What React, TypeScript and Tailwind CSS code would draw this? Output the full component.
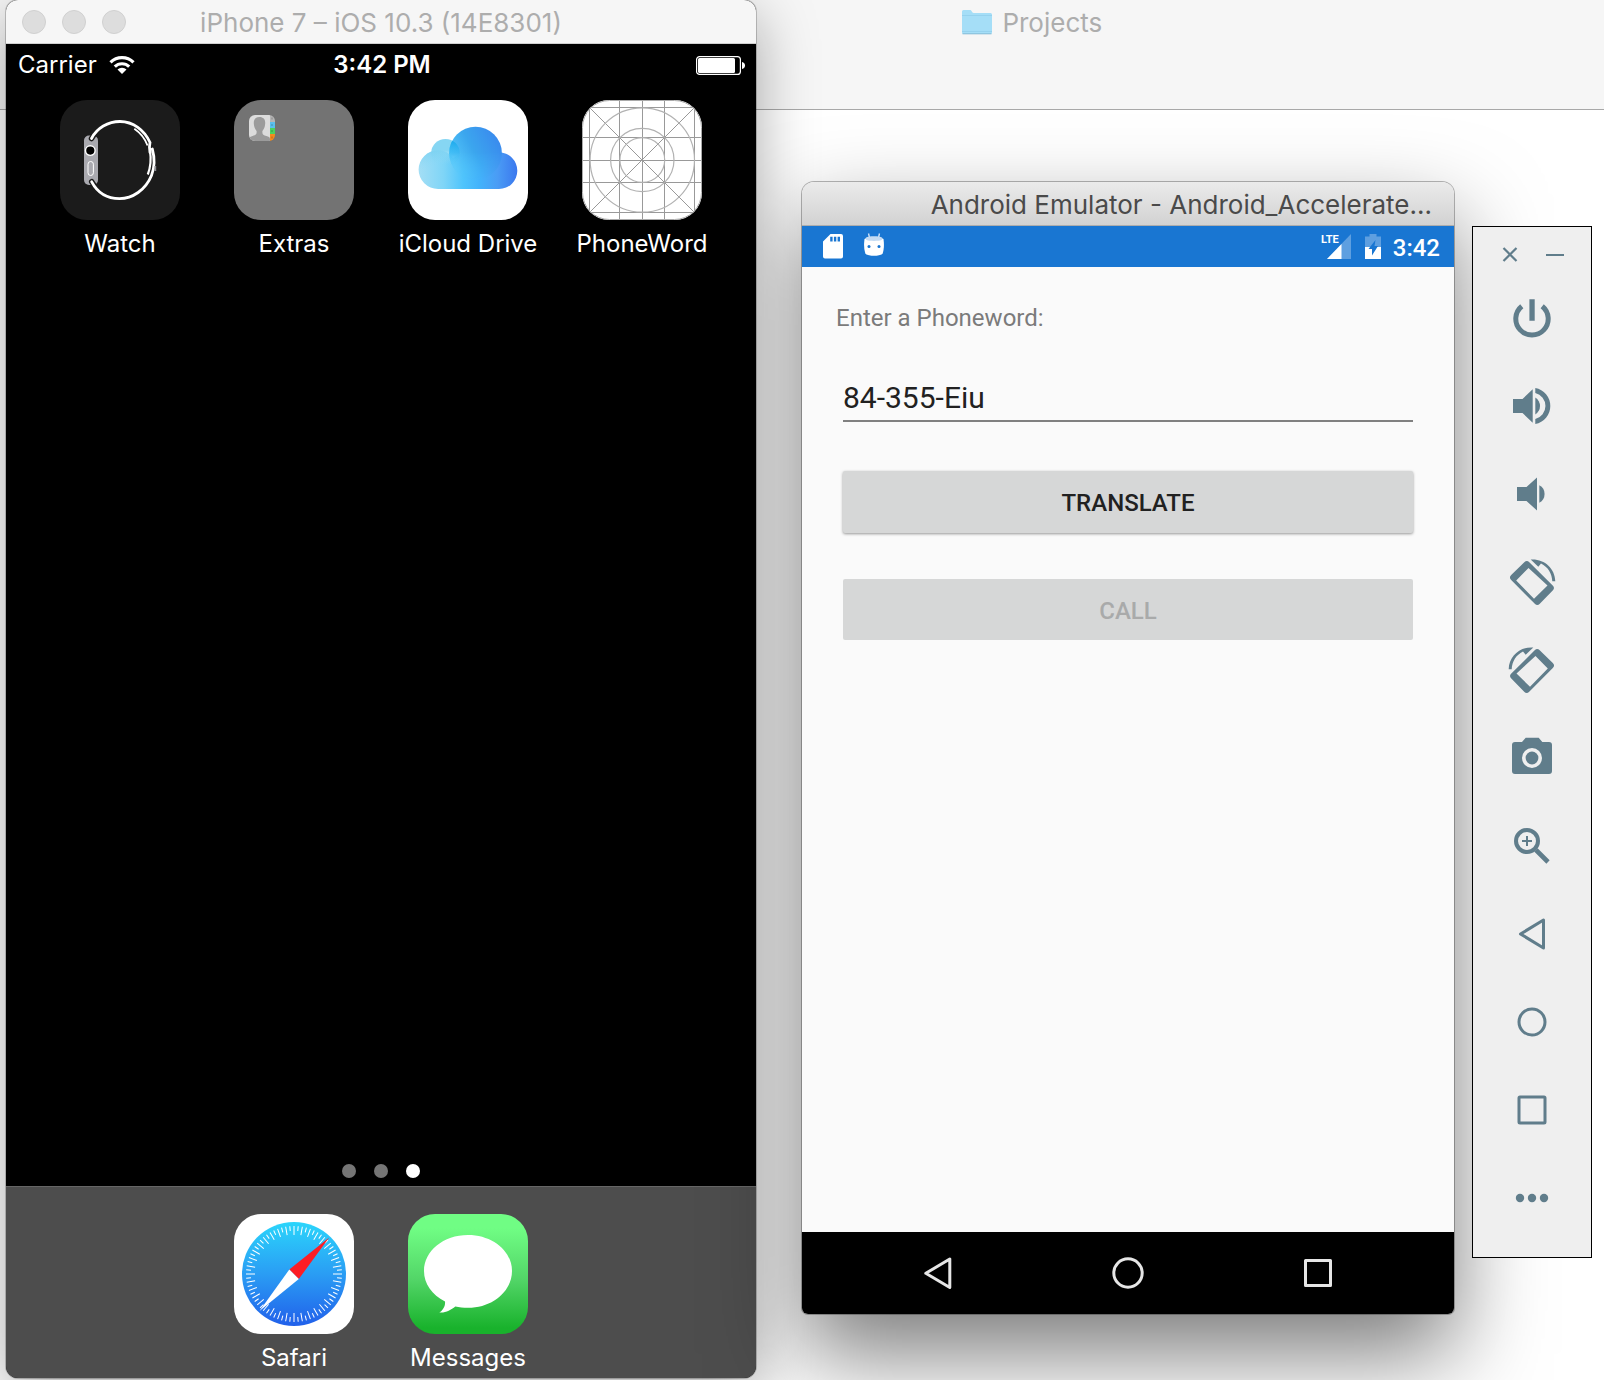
import type { ReactNode } from "react";

const APPLE = "font-['Inter',sans-serif]";
const DROID = "font-['Roboto',sans-serif]";

/* ---------- iOS icons ---------- */

function WatchIcon() {
  return (
    <svg viewBox="0 0 120 120" className="size-30" fill="none" stroke="#fff" aria-hidden="true">
      <rect width="120" height="120" rx="27" fill="#1b1b1b" stroke="none" />
      <rect x="24" y="35.500" width="14" height="49.500" rx="5" fill="#a9a9af" stroke="none" />
      <path d="M31.500 38.500l2-3M31.700 81.700l2 3" stroke="#1b1b1b" strokeWidth="5.500" strokeLinecap="round" />
      <path d="M31.500 38.500C37 28 48 21.500 60 21.500c13 0 24.500 8.500 30 21-1 4-.8 6 0 10" strokeWidth="2.800" strokeLinecap="round" />
      <path d="M90 51c1.300 8 .6 16-2.200 23.500" strokeWidth="2.200" />
      <path d="M92.300 49c2.800 10 2.500 18-.8 26.500C85.500 90 72.500 98.600 59.500 98.600c-12 0-22-6-27.800-16.800" strokeWidth="2.800" strokeLinecap="round" />
      <path d="M74.300 28.800c6 4 10.500 9.500 13.200 16.700" strokeWidth="1.800" />
      <path d="M95.300 66v5" stroke="#8e8e93" strokeWidth="1.800" />
      <circle cx="30.300" cy="50.600" r="4.800" fill="#000" strokeWidth="1.400" />
      <rect x="28" y="61.500" width="5.400" height="14" rx="2.700" strokeWidth="1" />
    </svg>
  );
}

function ExtrasIcon() {
  return (
    <svg viewBox="0 0 120 120" className="size-30" aria-hidden="true">
      <defs>
        <clipPath id="contact">
          <rect x="15" y="15" width="26" height="26" rx="6" />
        </clipPath>
      </defs>
      <rect width="120" height="120" rx="27" fill="#737373" />
      <g clipPath="url(#contact)">
        <rect x="15" y="15" width="21" height="26" fill="#dcdcdc" />
        <path d="M25.500 17c-4 0-6 2.500-5.700 6.500.2 4 1.700 6 2.800 7.500.3 3.500-1 4-4 5-2 .6-3.600 1-3.600 3v2h21v-2c0-2-1.600-2.400-3.600-3-3-1-4.300-1.500-4-5 1.100-1.500 2.600-3.500 2.800-7.500.3-4-1.700-6.500-5.700-6.500z" fill="#9b9b9b" />
        <rect x="36" y="15" width="5" height="7" fill="#b5b5b5" />
        <rect x="36" y="22" width="5" height="6" fill="#5ac0ee" />
        <rect x="36" y="28" width="5" height="6" fill="#4cd15f" />
        <rect x="36" y="34" width="5" height="7" fill="#f38b1e" />
        <path d="M38 17.500v2M38 24v2M38 30v2M38 36.500v2" stroke="#00000040" />
      </g>
    </svg>
  );
}

function CloudIcon() {
  return (
    <svg viewBox="0 0 120 120" className="size-30" aria-hidden="true">
      <defs>
        <linearGradient id="base" gradientUnits="userSpaceOnUse" x1="11" y1="0" x2="109" y2="0">
          <stop offset="0" stopColor="#a3def5" />
          <stop offset="0.25" stopColor="#7fd5f7" />
          <stop offset="0.45" stopColor="#4fc4fc" />
          <stop offset="0.62" stopColor="#42b2fb" />
          <stop offset="0.8" stopColor="#4a9cf5" />
          <stop offset="1" stopColor="#3b78ee" />
        </linearGradient>
        <linearGradient id="dome" gradientUnits="userSpaceOnUse" x1="46" y1="64" x2="92" y2="40">
          <stop offset="0" stopColor="#55c8fa" />
          <stop offset="0.45" stopColor="#3ba6ee" />
          <stop offset="1" stopColor="#3a8aee" />
        </linearGradient>
        <linearGradient id="domeFade" gradientUnits="userSpaceOnUse" x1="0" y1="30" x2="0" y2="80">
          <stop offset="0.45" stopColor="#fff" />
          <stop offset="1" stopColor="#000" />
        </linearGradient>
        <linearGradient id="puff" x1="0" y1="0" x2="0" y2="1">
          <stop offset="0.400" stopColor="#86d6f3" />
          <stop offset="0.900" stopColor="#86d6f3" stopOpacity="0" />
        </linearGradient>
        <linearGradient id="overlap" gradientUnits="userSpaceOnUse" x1="0" y1="40" x2="0" y2="66">
          <stop offset="0" stopColor="#14a8ec" stopOpacity="0.900" />
          <stop offset="1" stopColor="#4cc4f8" stopOpacity="0" />
        </linearGradient>
        <linearGradient id="left" x1="0" y1="0" x2="0.300" y2="1">
          <stop offset="0" stopColor="#6fcdf0" stopOpacity="0.700" />
          <stop offset="0.500" stopColor="#8ed8f5" stopOpacity="0" />
        </linearGradient>
        <mask id="domeMask">
          <rect width="120" height="120" fill="url(#domeFade)" />
        </mask>
        <clipPath id="domeClip">
          <circle cx="67.500" cy="53.200" r="26.400" />
        </clipPath>
      </defs>
      <rect width="120" height="120" rx="27" fill="#fff" />
      <path d="M30 50.200a19.400 19.400 0 0 0 0 38.800h61a18.300 18.300 0 1 0 0-36.600L67 45 45 58A19.400 19.400 0 0 0 30 50.200z" fill="url(#base)" />
      <circle cx="37.500" cy="53.200" r="14.300" fill="url(#puff)" />
      <circle cx="30.400" cy="69.600" r="19.400" fill="url(#left)" />
      <circle cx="67.500" cy="53.200" r="26.400" fill="url(#dome)" mask="url(#domeMask)" />
      <g clipPath="url(#domeClip)">
        <circle cx="37.500" cy="53.200" r="14.300" fill="url(#overlap)" />
      </g>
    </svg>
  );
}

const GUIDES = [7.5, 37.5, 60.5, 82.5, 112.5];

function GridIcon() {
  return (
    <svg viewBox="0 0 120 120" className="size-30" aria-hidden="true">
      <defs>
        <clipPath id="tile">
          <rect width="120" height="120" rx="27" />
        </clipPath>
      </defs>
      <g clipPath="url(#tile)" fill="none" stroke="#999">
        <rect width="120" height="120" fill="#fff" stroke="none" />
        {GUIDES.map((g) => (
          <path key={g} d={`M${g} 0V120M0 ${g}H120`} />
        ))}
        <path d="M7.500 7.500l105 105M112.500 7.500l-105 105" />
        <g stroke="#b2b2b2" strokeWidth="1.200">
          <circle cx="60.300" cy="60" r="52.200" />
          <circle cx="60.300" cy="60" r="31.700" />
          <circle cx="60.300" cy="60" r="22.400" />
        </g>
        <rect x="0.500" y="0.500" width="119" height="119" rx="27" stroke="#aaa" />
      </g>
    </svg>
  );
}

const TICKS = Array.from({ length: 72 }, (_, i) => i * 5);

function SafariIcon() {
  return (
    <svg viewBox="0 0 120 120" className="size-30" aria-hidden="true">
      <defs>
        <linearGradient id="sea" x1="0" y1="0" x2="0" y2="1">
          <stop offset="0" stopColor="#2bd5fb" />
          <stop offset="0.5" stopColor="#2a9df4" />
          <stop offset="1" stopColor="#2160ea" />
        </linearGradient>
      </defs>
      <rect width="120" height="120" rx="27" fill="#fff" />
      <circle cx="60" cy="60" r="52" fill="url(#sea)" />
      {TICKS.map((a) => (
        <path
          key={a}
          d={a % 90 === 0 ? "M60 12v9" : a % 10 === 0 ? "M60 12v8.500" : "M60 12v4.800"}
          stroke="#fff"
          strokeWidth="1"
          transform={`rotate(${a} 60 60)`}
        />
      ))}
      <path d="M95.200 23.500L55.300 55.500l9.500 9.500z" fill="#fc1d25" />
      <path d="M25.500 97l29.800-41.500 9.500 9.500z" fill="#fff" />
    </svg>
  );
}

function MessagesIcon() {
  return (
    <svg viewBox="0 0 120 120" className="size-30" aria-hidden="true">
      <defs>
        <linearGradient id="leaf" x1="0" y1="0" x2="0" y2="1">
          <stop offset="0.120" stopColor="#70fd84" />
          <stop offset="0.550" stopColor="#52d567" />
          <stop offset="0.950" stopColor="#19b22c" />
        </linearGradient>
      </defs>
      <rect width="120" height="120" rx="27" fill="url(#leaf)" />
      <path d="M60 21c-24.500 0-44 16-44 36 0 12.500 8 24 21 30.500.5 4.500-2 8.500-5.700 11 6 .8 11.500-2.500 16-6 4 .9 8 1.300 12.700 1.300 24.500 0 44-16.800 44-36.800S84.500 21 60 21z" fill="#fff" />
    </svg>
  );
}

function IosApp({ label, children }: { label: string; children: ReactNode }) {
  return (
    <button type="button" className="flex w-30 flex-col items-center gap-2 text-2xl text-white">
      {children}
      <span className="whitespace-nowrap">{label}</span>
    </button>
  );
}

function IosSimulator() {
  return (
    <section
      aria-label="iPhone simulator"
      className={`${APPLE} flex flex-[750] flex-col overflow-hidden rounded-xl bg-black shadow-[0_0_0_1px_rgba(0,0,0,0.2),0_16px_60px_rgba(0,0,0,0.34)]`}
    >
      <header className="grid h-11 grid-cols-[1fr_auto_1fr] items-center border-b border-[#d0d0d0] bg-[#f6f6f6] px-4">
        <div className="flex gap-4">
          <button type="button" aria-label="Close" className="size-6 rounded-full border border-[#d0d0d0] bg-[#dddddd]" />
          <button type="button" aria-label="Minimize" className="size-6 rounded-full border border-[#d0d0d0] bg-[#dddddd]" />
          <button type="button" aria-label="Zoom" className="size-6 rounded-full border border-[#d0d0d0] bg-[#dddddd]" />
        </div>
        <h1 className="pt-0.5 text-[26px] text-[#adadad]">iPhone 7 – iOS 10.3 (14E8301)</h1>
      </header>

      <div className="grid h-10 grid-cols-3 items-center pt-0.5 pr-2.5 pl-3 text-2xl text-white">
        <div className="flex items-center gap-3">
          <span>Carrier</span>
          <svg viewBox="0 0 26 18" className="h-[18px] w-[26px]" fill="none" stroke="#fff" strokeWidth="3.200" aria-hidden="true">
            <path d="M1.500 6.300a16.500 16.500 0 0 1 23 0" />
            <path d="M5.800 10.700a10.300 10.300 0 0 1 14.400 0" />
            <path d="M13 18l-4.500-4.500a6.400 6.400 0 0 1 9 0z" fill="#fff" stroke="none" />
          </svg>
        </div>
        <span className="text-center font-semibold">3:42 PM</span>
        <svg viewBox="0 0 50 19" className="h-[19px] w-[50px] justify-self-end" aria-hidden="true">
          <rect x="0.600" y="0.600" width="43.800" height="17.800" rx="3" fill="none" stroke="#fff" strokeWidth="1.200" />
          <rect x="2" y="2" width="37" height="15" rx="1.500" fill="#fff" />
          <path d="M46 6c2 .3 3 1.800 3 3.500S48 12.700 46 13z" fill="#fff" />
        </svg>
      </div>

      <div className="flex justify-evenly pt-4">
        <IosApp label="Watch"><WatchIcon /></IosApp>
        <IosApp label="Extras"><ExtrasIcon /></IosApp>
        <IosApp label="iCloud Drive"><CloudIcon /></IosApp>
        <IosApp label="PhoneWord"><GridIcon /></IosApp>
      </div>

      <div className="mt-auto mb-2 flex justify-center gap-[18px]">
        <span className="size-3.5 rounded-full bg-[#757575]" />
        <span className="size-3.5 rounded-full bg-[#757575]" />
        <span className="size-3.5 rounded-full bg-white" />
      </div>

      <div className="flex h-48 justify-center gap-[54px] border-t border-[#666] bg-[#4d4d4d] pt-[27px]">
        <IosApp label="Safari"><SafariIcon /></IosApp>
        <IosApp label="Messages"><MessagesIcon /></IosApp>
      </div>
    </section>
  );
}

/* ---------- Android emulator ---------- */

function AndroidStatusBar() {
  return (
    <div className="flex h-[41px] items-center bg-[#1976d2] pr-3.5 pl-[21px] text-white">
      <svg viewBox="0 0 20 25" className="h-[25px] w-5" aria-hidden="true">
        <path fillRule="evenodd" d="M7.500 0H18a2 2 0 0 1 2 2v20.500a2 2 0 0 1-2 2H2a2 2 0 0 1-2-2V7.500zM7.200 2.800v4.700h2.400V2.800zm3.700 0v4.700h2.400V2.800zm3.700 0v4.700H17V2.800z" fill="#fff" />
      </svg>
      <svg viewBox="0 0 20 24" className="mb-1 ml-[21px] h-6 w-5" aria-hidden="true">
        <path d="M4.500.5l1 4M15.500.5l-1 4" stroke="#cfe1f5" strokeWidth="1.400" />
        <path d="M.5 6c3-2.500 16-2.500 19 0 .7 5 .6 10-.8 14.500C17 23.500 3 23.500 1.300 20.500-.1 16-.2 11 .5 6z" fill="#fff" />
        <path d="M2 4.500c3-1.700 13-1.700 16 0 .5 1 .3 2-.5 2.600-3 1.200-12 1.200-15 0-.8-.6-1-1.600-.5-2.600z" fill="#c4dbf3" />
        <circle cx="5" cy="13.500" r="1.500" fill="#1976d2" />
        <circle cx="15" cy="13.500" r="1.500" fill="#1976d2" />
      </svg>
      <div className="ml-auto flex h-[25px] items-start">
        <span className="text-[11px] leading-3 font-bold">LTE</span>
        <svg viewBox="0 0 24 25" className="-ml-3 h-[25px] w-6" aria-hidden="true">
          <path d="M24 0v25H0z" fill="#5e9fe0" />
          <path d="M14.500 10v15H0z" fill="#fff" />
        </svg>
      </div>
      <svg viewBox="0 0 16 25" className="ml-3.5 h-[25px] w-4" aria-hidden="true">
        <path d="M4.500 0h7v2.500H16V13H0V2.500h4.500z" fill="#5e9fe0" />
        <path d="M0 13h16v12H0z" fill="#fff" />
        <path d="M10.500 6L3.500 15H7v6.500L13 12H9.500z" fill="#1976d2" />
      </svg>
      <span className="ml-3 pt-0.5 text-2xl font-medium">3:42</span>
    </div>
  );
}

function AndroidEmulator() {
  return (
    <section
      aria-label="Android emulator"
      className={`${DROID} mt-[182px] flex h-[1132px] flex-[652] flex-col overflow-hidden rounded-t-xl rounded-b-md bg-[#fafafa] shadow-[0_0_0_1px_rgba(0,0,0,0.28),0_40px_90px_rgba(0,0,0,0.52)]`}
    >
      <header className={`${APPLE} flex h-11 items-center justify-end border-b border-[#adadad] bg-linear-to-b from-[#ebebeb] to-[#d2d2d2] pt-0.5 pr-[22px]`}>
        <h2 className="truncate text-[26px] text-[#4a4a4a]">Android Emulator - Android_Accelerate...</h2>
      </header>
      <AndroidStatusBar />

      <form className="flex flex-1 flex-col px-[41px] pt-[35px]" onSubmit={(e) => e.preventDefault()}>
        <label htmlFor="phoneword" className="-ml-[7px] text-2xl text-[#7b7b7b]">Enter a Phoneword:</label>
        <input
          id="phoneword"
          type="text"
          defaultValue="84-355-Eiu"
          className="mt-[29px] h-[59px] w-full border-b-2 border-[#808080] bg-transparent pt-3 text-3xl text-[#212121] outline-none"
        />
        <button type="submit" className="mt-[49px] h-[62px] rounded-xs bg-[#d6d7d7] pt-0.5 text-2xl font-medium text-[#212121] shadow-[0_1px_3px_rgba(0,0,0,0.4)]">
          TRANSLATE
        </button>
        <button type="button" disabled className="mt-[46px] h-[61px] rounded-xs bg-[#d6d7d7] pt-0.5 text-2xl font-medium text-[#a9aaaa]">
          CALL
        </button>
      </form>

      <nav aria-label="Device navigation" className="flex h-[82px] items-center justify-center gap-[142px] bg-black">
        <button type="button" aria-label="Back">
          <svg viewBox="0 0 48 48" className="size-12" fill="none" stroke="#e6e6e6" strokeWidth="3" strokeLinejoin="round" aria-hidden="true">
            <path d="M35.800 10v28.500L11.800 24.300z" />
          </svg>
        </button>
        <button type="button" aria-label="Home">
          <svg viewBox="0 0 48 48" className="size-12" fill="none" stroke="#e6e6e6" strokeWidth="3" aria-hidden="true">
            <circle cx="24" cy="24" r="14.200" />
          </svg>
        </button>
        <button type="button" aria-label="Overview">
          <svg viewBox="0 0 48 48" className="size-12" fill="none" stroke="#e6e6e6" strokeWidth="3" strokeLinejoin="round" aria-hidden="true">
            <rect x="11.500" y="11.500" width="25" height="25" />
          </svg>
        </button>
      </nav>
    </section>
  );
}

/* ---------- Emulator toolbar ---------- */

function RotateGlyph() {
  return (
    <>
      <path fillRule="evenodd" d="M16.300 4.200a3.500 3.500 0 0 1 5 0L44.700 27.600a3.500 3.500 0 0 1 0 5L31.800 45.800a3.500 3.500 0 0 1-5 0L3.200 22a3.500 3.500 0 0 1 0-5zM20.500 10L8.200 22.500 26 40.800 39.500 27.500z" />
      <path d="M22.700 1.500C36 .5 47 10 47.300 23.300h-3C44 15.500 40 9 33 5.500l-2.700 3.300z" />
    </>
  );
}

const TOOLS: { name: string; glyph: ReactNode }[] = [
  {
    name: "Power",
    glyph: (
      <>
        <path d="M21.400 5.300h5.300v21.400h-5.300z" />
        <path d="M13.800 12.200a16.200 16.200 0 1 0 20.400 0" fill="none" stroke="currentColor" strokeWidth="5" />
      </>
    ),
  },
  {
    name: "Volume up",
    glyph: (
      <>
        <path d="M5 17h9.500l10.200-9.700v33.400L14.500 31H5z" />
        <path d="M27.300 15.500a10 10 0 0 1 0 17z" />
        <path d="M27.300 6a18.300 18.300 0 0 1 0 36v-5a13.400 13.400 0 0 0 0-26z" />
      </>
    ),
  },
  {
    name: "Volume down",
    glyph: (
      <>
        <path d="M9 17h9.500L29 7.500v33L18.500 31H9z" />
        <path d="M31.300 15.300a9.800 9.800 0 0 1 0 17.400z" />
      </>
    ),
  },
  { name: "Rotate left", glyph: <RotateGlyph /> },
  {
    name: "Rotate right",
    glyph: (
      <g transform="translate(48 0) scale(-1 1)">
        <RotateGlyph />
      </g>
    ),
  },
  {
    name: "Take screenshot",
    glyph: (
      <>
        <path fillRule="evenodd" d="M17.700 3.700h13l3.600 4.300H41a3 3 0 0 1 3 3v26a3 3 0 0 1-3 3H7a3 3 0 0 1-3-3V11a3 3 0 0 1 3-3h7zM24 14a10 10 0 1 0 0 20 10 10 0 0 0 0-20z" />
        <circle cx="24" cy="24" r="6.400" />
      </>
    ),
  },
  {
    name: "Zoom",
    glyph: (
      <g fill="none" stroke="currentColor">
        <circle cx="19" cy="19" r="11" strokeWidth="4" />
        <path d="M28 28l12 12" strokeWidth="4.600" />
        <path d="M19 14v10M14 19h10" strokeWidth="2" />
      </g>
    ),
  },
  {
    name: "Back",
    glyph: <path d="M35.500 10v28L12.500 24z" fill="none" stroke="currentColor" strokeWidth="3" strokeLinejoin="round" />,
  },
  {
    name: "Home",
    glyph: <circle cx="24" cy="24" r="13" fill="none" stroke="currentColor" strokeWidth="3" />,
  },
  {
    name: "Overview",
    glyph: <rect x="11" y="11" width="26" height="26" rx="1" fill="none" stroke="currentColor" strokeWidth="3" />,
  },
  {
    name: "More",
    glyph: (
      <>
        <circle cx="12" cy="24" r="4.200" />
        <circle cx="24" cy="24" r="4.200" />
        <circle cx="36" cy="24" r="4.200" />
      </>
    ),
  },
];

function EmulatorToolbar() {
  return (
    <aside
      aria-label="Emulator controls"
      className="relative mt-[226px] w-30 shrink-0 border border-black bg-[#efefef] pb-[15px] text-[#607d8b]"
    >
      <div className="flex h-[47px] items-center justify-center gap-[21px] pt-2">
        <button type="button" aria-label="Close emulator">
          <svg viewBox="0 0 24 24" className="size-6" stroke="currentColor" strokeWidth="2.200" aria-hidden="true">
            <path d="M5.500 5l13 13M18.500 5l-13 13" />
          </svg>
        </button>
        <button type="button" aria-label="Minimize emulator">
          <svg viewBox="0 0 24 24" className="size-6" stroke="currentColor" strokeWidth="2" aria-hidden="true">
            <path d="M3 12h18" />
          </svg>
        </button>
      </div>
      {TOOLS.map(({ name, glyph }) => (
        <button key={name} type="button" aria-label={name} className="flex h-22 w-full items-center justify-center">
          <svg viewBox="0 0 48 48" className="size-12" fill="currentColor" aria-hidden="true">
            {glyph}
          </svg>
        </button>
      ))}
    </aside>
  );
}

function FinderBackdrop() {
  return (
    <div className={`${APPLE} col-start-1 row-start-1 bg-white`}>
      <div className="flex h-[110px] items-start gap-2.5 border-b border-[#a8a8a8] bg-[#f6f6f6] pt-[7px] pl-[60%]">
        <svg viewBox="0 0 30 26" className="mt-[3px] h-[26px] w-[30px]" aria-hidden="true">
          <path d="M0 1.500A1.500 1.500 0 0 1 1.500 0h7c1 0 1.500 3 3 3h17A1.500 1.500 0 0 1 30 4.500v18a1.500 1.500 0 0 1-1.500 1.500h-27A1.500 1.500 0 0 1 0 22.500z" fill="#a5def7" />
          <path d="M0 5.500h30M0 21.500h30" stroke="#8fcdea" strokeWidth="0.700" />
          <path d="M.5 23.800h29" stroke="#86bdd6" />
        </svg>
        <span className="text-[26px] leading-8 text-[#adadad]">Projects</span>
      </div>
    </div>
  );
}

export default function App() {
  return (
    <main className="grid min-h-screen overflow-hidden">
      <FinderBackdrop />
      <div className="col-start-1 row-start-1 flex items-start pr-3 pb-0.5 pl-1.5">
        <div className="flex flex-[750] self-stretch">
          <IosSimulator />
        </div>
        <div className="ml-[46px] flex flex-[652]">
          <AndroidEmulator />
        </div>
        <div className="ml-[18px] flex shrink-0">
          <EmulatorToolbar />
        </div>
      </div>
    </main>
  );
}
